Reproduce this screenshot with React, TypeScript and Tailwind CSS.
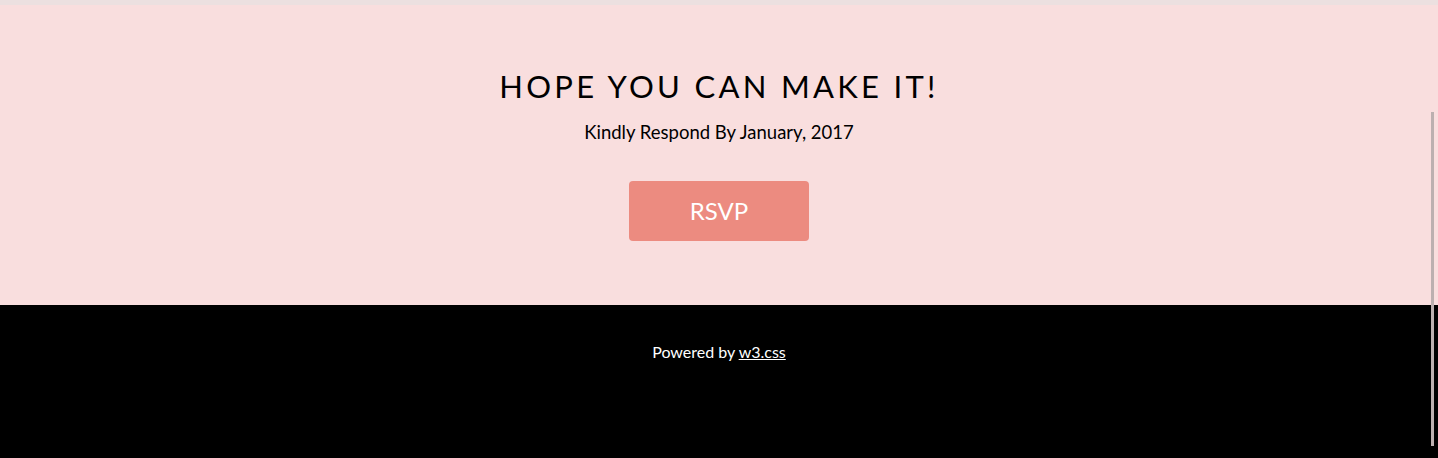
export default function App() {
  return (
    <div className="relative h-[458px] w-full overflow-hidden bg-black font-['Lato',_sans-serif]">
      <div className="h-[5px] bg-[#ece0e0]" />
      <section className="flex h-[300px] flex-col items-center bg-[#f9dede] pt-[63px]">
        <h1 className="text-[31px] leading-[36px] tracking-[3.3px] text-black">HOPE YOU CAN MAKE IT!</h1>
        <p className="mt-[16px] text-[18.5px] leading-[24px] text-black">Kindly Respond By January, 2017</p>
        <button className="mt-[37px] h-[60px] w-[180px] rounded-[4px] bg-[#ec8b80] text-[24px] text-white">
          RSVP
        </button>
      </section>
      <footer className="flex h-[153px] justify-center bg-black pt-[37px]">
        <p className="text-[16px] leading-[20px] text-white">
          Powered by <a className="underline">w3.css</a>
        </p>
      </footer>
      <div className="absolute right-[4px] top-[112px] h-[334px] w-[3px] bg-[#bcb0b0]" />
    </div>
  );
}
